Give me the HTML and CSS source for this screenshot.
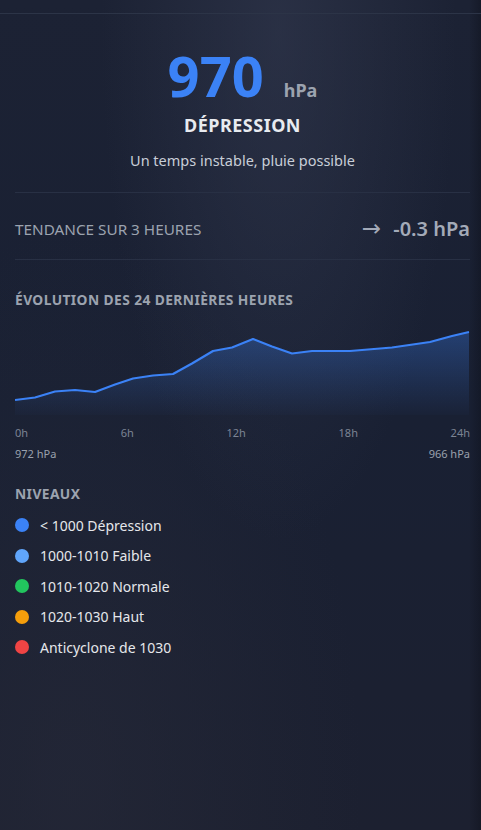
FILE: index.html
```html
<!DOCTYPE html>
<html lang="fr">
<head>
    <meta charset="UTF-8">
    <meta name="viewport" content="width=device-width, initial-scale=1.0">
    <title>Pression atmosphérique</title>
    <link rel="stylesheet" href="styles.css">
</head>
<body>
    <div class="top_bar"></div>

    <div id="pressure_card">
        <div class="main_value">
            <span class="value">970</span>
            <span class="unit">hPa</span>
        </div>
        <div class="status">DÉPRESSION</div>
        <p class="description">Un temps instable, pluie possible</p>

        <div class="trend_row">
            <span class="trend_label">TENDANCE SUR 3 HEURES</span>
            <span class="trend_value"><span class="arrow">→</span> -0.3 hPa</span>
        </div>

        <div class="history">
            <h3 class="section_title">ÉVOLUTION DES 24 DERNIÈRES HEURES</h3>
            <svg class="chart" width="455" height="96" viewBox="0 0 455 96" preserveAspectRatio="none">
                <defs>
                    <linearGradient id="fill_grad" x1="0" y1="0" x2="0" y2="1">
                        <stop offset="0" stop-color="#3b82f6" stop-opacity="0.32"/>
                        <stop offset="1" stop-color="#3b82f6" stop-opacity="0.02"/>
                    </linearGradient>
                </defs>
                <polygon fill="url(#fill_grad)" points="0,81 20,78.5 40,72.5 60,71 80,73 100,65.5 118,59.5 138,56.5 158,55 177,44.5 198,32 217,28.5 238,20 257,27.5 277,34.5 297,32 335,32 377,28.5 415,23 437,17 454,13 454,96 0,96"/>
                <polyline fill="none" stroke="#3b82f6" stroke-width="2.2" stroke-linejoin="round" points="0,81 20,78.5 40,72.5 60,71 80,73 100,65.5 118,59.5 138,56.5 158,55 177,44.5 198,32 217,28.5 238,20 257,27.5 277,34.5 297,32 335,32 377,28.5 415,23 437,17 454,13"/>
            </svg>
            <div class="axis">
                <span>0h</span><span>6h</span><span>12h</span><span>18h</span><span>24h</span>
            </div>
            <div class="range">
                <span>972 hPa</span><span>966 hPa</span>
            </div>
        </div>

        <div class="levels">
            <h3 class="section_title">NIVEAUX</h3>
            <div class="level_item"><span class="dot dot_deep"></span>&lt; 1000 Dépression</div>
            <div class="level_item"><span class="dot dot_low"></span>1000-1010 Faible</div>
            <div class="level_item"><span class="dot dot_normal"></span>1010-1020 Normale</div>
            <div class="level_item"><span class="dot dot_high"></span>1020-1030 Haut</div>
            <div class="level_item"><span class="dot dot_anti"></span>Anticyclone de 1030</div>
        </div>
    </div>
</body>
</html>
```

FILE: styles.css
```css
:root {
    --blue: #3b82f6;
    --text-gray: #9ca3af;
    --divider: #283044;
}

body {
    font-family: "Noto Sans", "Open Sans", sans-serif;
    margin: 0;
    padding: 0;
    min-height: 830px;
    color: #e5e7eb;
    background:
        linear-gradient(90deg, transparent 469px, rgba(10, 12, 20, 0.35) 481px),
        radial-gradient(ellipse at 58% 4%, rgba(55, 62, 85, 0.5), transparent 45%),
        radial-gradient(ellipse at 15% 95%, rgba(42, 45, 60, 0.45), transparent 50%),
        linear-gradient(180deg, #1c2234 0%, #192033 50%, #1c2030 100%);
}

.top_bar {
    height: 13px;
    border-bottom: 1px solid #2c3447;
}

#pressure_card {
    width: 455px;
    padding: 0 11px 0 15px;
}

.main_value {
    display: flex;
    justify-content: center;
    align-items: baseline;
    gap: 20px;
    margin-top: 33px;
    line-height: 1;
}

.value {
    color: var(--blue);
    font-size: 56px;
    font-weight: 700;
}

.unit {
    color: var(--text-gray);
    font-size: 18px;
    font-weight: 700;
}

.status {
    text-align: center;
    font-size: 18px;
    font-weight: 700;
    letter-spacing: 0.5px;
    margin-top: 10px;
    color: #e8ebf0;
}

.description {
    text-align: center;
    font-size: 14.5px;
    color: #c8ced8;
    margin: 13px 0 0;
    padding-bottom: 22px;
    border-bottom: 1px solid var(--divider);
}

.trend_row {
    display: flex;
    justify-content: space-between;
    align-items: center;
    height: 67px;
    padding-top: 5px;
    box-sizing: border-box;
    border-bottom: 1px solid var(--divider);
}

.trend_label {
    font-size: 15.3px;
    color: var(--text-gray);
}

.trend_value {
    font-size: 20px;
    font-weight: 600;
    color: #a3aab8;
}

.arrow {
    font-family: "DejaVu Sans", sans-serif;
    font-weight: 400;
    font-size: 23px;
    margin-right: 7px;
}

.section_title {
    margin: 0;
    font-size: 13.8px;
    font-weight: 700;
    letter-spacing: 0.4px;
    color: var(--text-gray);
}

.history {
    padding-top: 30px;
}

.chart {
    display: block;
    margin-top: 10px;
}

.axis, .range {
    display: flex;
    justify-content: space-between;
    font-size: 11px;
    color: #7c8494;
}

.axis {
    margin-top: 10px;
}

.range {
    margin-top: 6px;
    color: #9aa1ad;
}

.levels {
    padding-top: 23px;
}

.level_item {
    display: flex;
    align-items: center;
    gap: 11px;
    font-size: 14px;
    color: #e5e7eb;
    height: 30.5px;
}

.levels .section_title {
    margin-bottom: 7px;
}

.dot {
    width: 14px;
    height: 14px;
    border-radius: 50%;
}

.dot_deep { background: #3b82f6; }
.dot_low { background: #60a5fa; }
.dot_normal { background: #22c55e; }
.dot_high { background: #f59e0b; }
.dot_anti { background: #ef4444; }
```
